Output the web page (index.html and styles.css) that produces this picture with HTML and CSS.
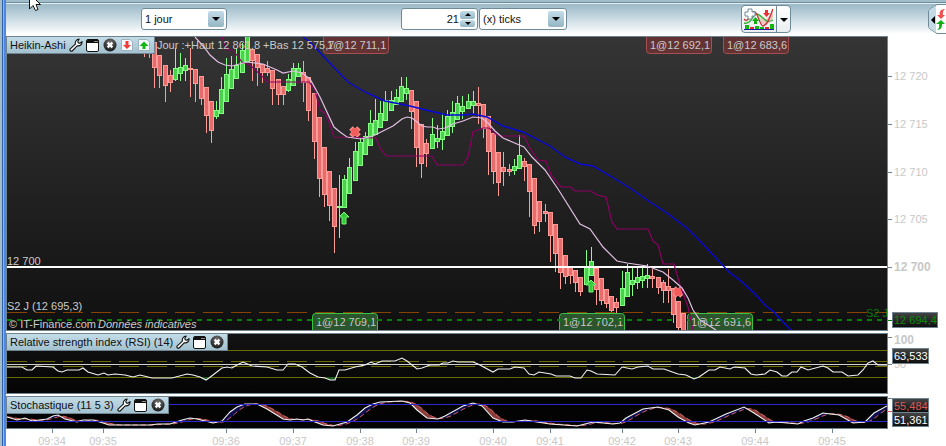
FILE: index.html
```html
<!DOCTYPE html>
<html lang="fr">
<head>
  <meta charset="UTF-8">
  <title>Heikin-Ashi - 21 ticks</title>
  <link rel="stylesheet" href="styles.css">
</head>
<body>

  <!-- Icônes -->
  <svg class="defs" aria-hidden="true">
    <defs>
      <linearGradient id="night" x1="0" y1="0" x2="0" y2="1">
        <stop offset="0" stop-color="#454545"/>
        <stop offset="1" stop-color="#0c0c0c"/>
      </linearGradient>
      <radialGradient id="ball" cx="0.5" cy="0.3" r="0.7">
        <stop offset="0" stop-color="#777"/>
        <stop offset="1" stop-color="#151515"/>
      </radialGradient>
    </defs>
    <symbol id="wrench" viewBox="0 0 14 14">
      <path d="M1 11.2 L6.4 6.2 C5.8 3.6 7.4 1.2 10.2 1 L8.8 3.2 L9.2 4.9 L11 5.2 L13 3.6 C13.4 6.4 11 8.4 8.2 7.8 L3.2 13 C1.8 13.6 0.4 12.4 1 11.2 Z" fill="#fff" stroke="#111" stroke-width="1.1" stroke-linejoin="round"/>
    </symbol>
    <symbol id="window" viewBox="0 0 14 14">
      <rect x="0.5" y="1.5" width="12" height="12" rx="1.5" fill="#fff" stroke="#111"/>
      <path d="M1 5 V3 Q1 1 3 1 H10 Q12.500 1 12.500 3 V5 Z" fill="#111"/>
      <path d="M8 3.500 H12" stroke="#888"/>
    </symbol>
    <symbol id="close" viewBox="0 0 14 14">
      <circle cx="7" cy="7" r="6.500" fill="url(#ball)"/>
      <path d="M4.600 4.600 L9.400 9.400 M9.400 4.600 L4.600 9.400" stroke="#fff" stroke-width="2.200"/>
    </symbol>
    <symbol id="sell" viewBox="0 0 14 14">
      <path d="M1.500 1.500 H10 L12.500 4 V12.500 H1.500 Z" fill="#f6fafc" stroke="#9fb3bd"/>
      <path d="M5.500 3 H8.500 V7 H11 L7 11 L3 7 H5.500 Z" fill="#f03c3c"/>
    </symbol>
    <symbol id="buy" viewBox="0 0 14 14">
      <path d="M1.500 1.500 H10 L12.500 4 V12.500 H1.500 Z" fill="#f6fafc" stroke="#9fb3bd"/>
      <path d="M5.500 11 H8.500 V8 H11.500 L7 3.500 L2.500 8 H5.500 Z" fill="#12b812"/>
    </symbol>
  </svg>

  <header class="toolbar">
    <div class="tools">
      <div class="field period">
        <select aria-label="Période">
          <option>1 jour</option>
          <option>2 jours</option>
        </select>
        <span class="drop"></span>
      </div>
      <div class="pair">
        <div class="field count">
          <input type="text" inputmode="numeric" value="21" aria-label="Nombre">
          <div class="spin">
            <button class="up" aria-label="Plus"></button>
            <button class="down" aria-label="Moins"></button>
          </div>
        </div>
        <div class="field unit">
          <select aria-label="Unité">
            <option>(x) ticks</option>
            <option>(x) minutes</option>
          </select>
          <span class="drop"></span>
        </div>
      </div>
      <div class="indicators">
        <button class="add" aria-label="Ajouter un indicateur">
          <svg width="32" height="24" viewBox="0 0 32 24">
            <path d="M2 15 C9 18 10 5 15 7 C20 9 23 17 30 12 L30 2 C26 10 22 22 18 15 C14 7 11 2 8 8 Z" fill="#c5ecc5"/>
            <path d="M18 8 C23 16 26 10 30 2 L30 10 C26 16 23 22 18 15 Z" fill="#f4c4c4"/>
            <path d="M1 16 C9 18 9 7 14 7 C20 8 22 18 30 13" fill="none" stroke="#35b035" stroke-width="1.300"/>
            <path d="M1 12 C6 18 8 2 12 5 C16 9 17 19 20 19 C25 18 27 9 30 2" fill="none" stroke="#c93838" stroke-width="1.300"/>
            <path d="M5 2 h4 v3 h3 v4 h-3 v3 h-4 v-3 h-3 v-4 h3 Z" fill="#fff" stroke="#6f8b98"/>
            <path d="M22 3 h3 v3 h2 l-3.500 4 l-3.500 -4 h2 Z" fill="#ee2f2f"/>
            <path d="M11 17 h3 v-3 h2 l-3.500 -4 l-3.500 4 h2 Z" fill="#12b012"/>
            <path d="M2 18 h4 v4 h-4 Z M12 19 h4 v3 h-4 Z M17 20 h4 v2 h-4 Z M27 17 h4 v5 h-4 Z" fill="#12b812"/>
            <path d="M7 20 h4 v2 h-4 Z M22 20 h4 v2 h-4 Z" fill="#e02c2c"/>
            <path d="M1 22.500 H31" stroke="#1c1ca8"/>
          </svg>
        </button>
        <button class="more" aria-label="Autres indicateurs"></button>
      </div>
    </div>
    <button class="side" aria-label="Ordres">
      <svg width="18" height="30" viewBox="0 0 18 30">
        <path d="M18 0.500 H9 L2 5 Q0.500 6 0.500 8 V22 Q0.500 24 2 25 L9 29.500 H18" fill="#fff" stroke="#6f8b98"/>
        <path d="M1 8 Q1 6 2 5.500 L8 1.500 V28.500 L2 24.500 Q1 24 1 22 Z" fill="#c4dae4"/>
        <path d="M7 12 V20 L3 16 Z" fill="#000"/>
        <path d="M17 5 C12 5 11 9 12 11 H9 L13 15 L17 11 H15 C14.500 8 15 7 17 5 Z" fill="#ee5050"/>
        <path d="M9 26 C14 26 14 22 14 20 H17 L13 16 L8 20 H11 C11.500 23 11 25 9 26 Z" fill="#12b012"/>
      </svg>
    </button>
    <svg class="pointer" width="14" height="12" viewBox="0 0 14 12" aria-hidden="true">
      <path d="M0.500 -6 V9 L4 5.500 L6.500 10.500 L9 9.500 L7 4.500 H11.500 L1 -6 Z" fill="#fff" stroke="#111"/>
    </svg>
  </header>

  <main>
    <section class="pane">
      <div class="plot price">
        <svg id="price" height="293" role="img" aria-label="Heikin-Ashi"></svg>
        <div class="title">
          <span>Heikin-Ashi</span>
          <button aria-label="Réglages"><svg><use href="#wrench"/></svg></button>
          <button aria-label="Fenêtre"><svg><use href="#window"/></svg></button>
          <button aria-label="Fermer"><svg><use href="#close"/></svg></button>
          <button aria-label="Vendre"><svg><use href="#sell"/></svg></button>
          <button aria-label="Acheter"><svg><use href="#buy"/></svg></button>
        </div>
      </div>
      <svg class="scale" id="priceScale" height="295"></svg>
    </section>

    <section class="pane">
      <div class="plot rsi">
        <svg id="rsi" height="59" role="img" aria-label="RSI"></svg>
        <div class="title">
          <span>Relative strength index (RSI) (14)</span>
          <button aria-label="Réglages"><svg><use href="#wrench"/></svg></button>
          <button aria-label="Fenêtre"><svg><use href="#window"/></svg></button>
          <button aria-label="Fermer"><svg><use href="#close"/></svg></button>
        </div>
      </div>
      <svg class="scale" id="rsiScale" height="61"></svg>
    </section>

    <section class="pane">
      <div class="plot stoch">
        <svg id="stoch" height="31" role="img" aria-label="Stochastique"></svg>
        <div class="title">
          <span>Stochastique (11 5 3)</span>
          <button aria-label="Réglages"><svg><use href="#wrench"/></svg></button>
          <button aria-label="Fenêtre"><svg><use href="#window"/></svg></button>
          <button aria-label="Fermer"><svg><use href="#close"/></svg></button>
        </div>
      </div>
      <svg class="scale" id="stochScale" height="33"></svg>
    </section>

    <svg class="times" id="times" height="17"></svg>
  </main>

  <script src="chart.js"></script>
</body>
</html>
```

FILE: styles.css
```css
* { box-sizing: border-box; margin: 0; padding: 0; }
body {
  background: #fff;
  color: #111;
  font-family: "Liberation Sans", Arial, sans-serif;
  font-size: 11px;
  border-left: 6px solid #4c86e8;
  border-image: linear-gradient(to right, #a3bcc8 0 2px, #2f62a8 2px 3px, #8ab4f4 3px 4px, #4c86e8 4px 6px) 0 0 0 6;
  overflow: hidden;
}
button { border: none; background: none; cursor: pointer; }
svg { display: block; }
svg text { font-size: 11px; }
.defs { position: absolute; width: 0; height: 0; }

/* Barre d'outils */
.toolbar {
  position: relative;
  display: flex;
  justify-content: space-between;
  align-items: center;
  height: 36px;
  padding: 4px 0 2px 135px;
  background: linear-gradient(to bottom, #a2bdca 0 2px, #6f8b98 2px 3px, #e4eff4 3px 4px, #9bb9c7 4px, #c3d6df 17px, #fff 34px);
}
.tools { display: flex; align-items: center; gap: 174px; }
.pair { display: flex; gap: 1px; }
.field {
  display: flex;
  position: relative;
  height: 22px;
  background: #fff;
  border: 1px solid #6f8b98;
  border-radius: 3px;
}
.period { width: 86px; }
.count { width: 77px; }
.unit { width: 88px; }
.field select, .field input {
  width: 100%;
  min-width: 0;
  padding-left: 4px;
  border: none;
  background: transparent;
  appearance: none;
  outline: none;
  color: #111;
  font: 11px "Liberation Sans", Arial, sans-serif;
}
.field select { padding-left: 3px; }
.field input { padding: 0 1px 0 0; text-align: right; }
.drop {
  position: absolute;
  top: 2px;
  right: 2px;
  width: 16px;
  height: 16px;
  border-radius: 2px;
  background: linear-gradient(#c4dde8, #94b5c4);
  pointer-events: none;
}
.drop::after, .more::after, .up::after, .down::after {
  content: "";
  display: block;
  width: 0;
  margin: 6px auto 0;
  border: 4px solid transparent;
  border-top-color: #000;
  border-bottom: none;
}
.spin {
  display: flex;
  flex-direction: column;
  gap: 1px;
  padding: 2px 2px 2px 0;
}
.spin button {
  width: 15px;
  height: 8px;
  border-radius: 2px;
  background: linear-gradient(#c4dde8, #94b5c4);
}
.up::after, .down::after { margin-top: 0; border-width: 3px; border-bottom: none; }
.up::after { border: 3px solid transparent; border-bottom-color: #000; border-top: none; }
.indicators {
  display: flex;
  height: 28px;
  border: 1px solid #6f8b98;
  border-radius: 4px;
  background: linear-gradient(#fff, #e9eef1);
}
.add { padding: 1px; width: 35px; border-right: 1px solid #6f8b98; }
.more { width: 13px; }
.more::after { margin-top: 2px; }
.pointer { position: absolute; left: 23px; top: 0; }

/* Graphiques */
main { display: flex; flex-direction: column; gap: 2px; }
.pane { display: flex; }
.plot {
  position: relative;
  flex: 1;
  min-width: 0;
  overflow: hidden;
  border: 1px solid #6f8490;
}
.plot > svg { width: 100%; }
.price { background: linear-gradient(#353535, #101010); }
.rsi { background: linear-gradient(#131313, #040404); }
.stoch { background: #030303; }
.scale { width: 58px; }
.title {
  position: absolute;
  top: 0;
  left: 0;
  display: flex;
  align-items: center;
  gap: 3px;
  height: 17px;
  padding: 0 3px;
  background: linear-gradient(#c3dde8, #a3c1cf);
  border-right: 1px solid #6f8490;
  border-bottom: 1px solid #6f8490;
  white-space: nowrap;
}
.title button, .title svg { width: 14px; height: 14px; }
.times { width: 100%; margin-top: -2px; }

.axis { fill: #c8c8c8; }
.axis.big { font-size: 12px; font-weight: bold; }
.tick { stroke: #6f8490; }
.note { fill: #cacaca; }
.zone { fill: none; stroke: #6b6b00; }
.dash { stroke-dasharray: 20 8; }
.average { fill: none; stroke: #e3bfe3; stroke-width: 1.2; }
.stop { fill: none; stroke: #8c0062; stroke-width: 1.2; }
.trend { fill: none; stroke: #0808d8; stroke-width: 1.4; }
.line { fill: none; stroke: #f2f2f2; stroke-width: 1.1; }
.signal { fill: none; stroke: #d0605c; stroke-dasharray: 5 3; }
.bound { stroke: #2a2ad0; }
```

FILE: chart.js
```js
// [x, haut, haut du corps, bas du corps, bas], u = hausse
const candles = [
  [144,42,42,52,57], [149,42,42,53,58], [154,42,42,68,88], [159,55,55,76,88], [165,65,65,86,102],
  [170,70,75,83,92], [175,48,68,80,81,'u'], [180,53,67,74,81,'u'], [185,58,65,71,81,'u'],
  [190,48,68,70,97], [195,69,69,84,102], [201,76,76,99,105], [206,87,87,116,133],
  [211,101,101,131,143], [216,101,110,117,119,'u'], [221,77,89,114,114,'u'],
  [226,58,74,102,102,'u'], [231,56,69,89,89,'u'], [236,48,65,79,79,'u'], [242,43,50,73,73,'u'],
  [247,30,30,62,62,'u'], [252,49,49,61,81], [257,54,54,68,86], [262,64,64,73,83],
  [267,61,68,73,76], [272,70,70,89,105], [278,79,79,95,105], [283,86,86,95,105],
  [288,74,79,91,92,'u'], [293,63,68,86,86,'u'], [298,63,68,77,77,'u'], [303,61,72,83,102],
  [308,77,77,111,121], [314,93,93,142,159], [319,117,117,179,197], [324,147,147,195,207],
  [329,171,171,206,221], [334,188,188,227,253], [339,175,206,208,238,'u'],
  [344,175,179,208,208,'u'], [349,158,167,194,194,'u'], [355,142,151,181,181,'u'],
  [360,138,142,166,166,'u'], [365,132,136,155,155,'u'], [370,110,123,146,146,'u'],
  [375,99,120,135,135,'u'], [380,101,113,128,128,'u'], [385,91,100,121,121,'u'],
  [391,91,100,111,111,'u'], [396,89,97,105,105,'u'], [401,77,86,102,102,'u'],
  [406,77,88,94,100,'u'], [411,90,90,112,129], [416,101,101,148,167], [421,124,124,164,178],
  [426,139,143,154,167], [432,118,134,149,149,'u'], [437,125,138,142,148,'u'],
  [442,113,131,140,150,'u'], [447,110,116,136,136,'u'], [452,101,112,127,133,'u'],
  [457,96,103,120,120,'u'], [462,96,106,112,119,'u'], [468,94,101,109,109,'u'],
  [473,91,101,106,114,'u'], [478,87,103,106,124], [483,104,104,129,138], [488,116,116,152,175],
  [493,133,133,172,184], [498,152,152,183,196], [503,152,167,172,186], [509,164,169,172,176],
  [514,159,166,171,175,'u'], [519,135,155,169,169,'u'], [524,158,161,167,181],
  [529,164,164,192,217], [534,178,178,226,234], [539,201,201,222,232], [545,204,211,214,222],
  [550,212,212,236,262], [555,224,224,254,272], [560,238,238,273,289], [565,255,255,277,284],
  [570,267,267,276,284], [575,270,270,283,292], [580,277,277,292,296],
  [586,250,267,285,285,'u'], [591,247,261,276,276,'u'], [596,268,268,290,305],
  [601,278,278,301,305], [606,289,289,304,308], [611,296,296,311,312], [616,298,302,308,313],
  [622,271,288,306,306,'u'], [627,264,272,297,297,'u'], [632,266,280,285,296,'u'],
  [637,266,277,283,289,'u'], [642,266,276,281,288,'u'], [647,264,275,279,288,'u'],
  [652,269,276,279,288], [658,277,277,288,294], [663,280,282,291,303], [668,269,286,291,303],
  [673,288,288,315,323], [678,301,301,328,330], [683,313,313,332,332]
];

const average = '195,37 204,47 210,55 218,62 225,65 232,66 247,62 263,64 277,70 283,73 293,71 302,73 310,79 320,97 334,127 340,132 347,137 361,139 373,136 385,130 393,126 402,119 407,117 412,118 422,126 427,127 433,127 438,129 445,128 453,124 463,121 473,117 482,118 488,123 495,131 503,138 517,144 524,147 532,157 545,170 558,189 580,224 590,229 603,247 617,261 627,263 647,266 663,272 673,280 682,288 688,298 693,310 700,320 708,325 716,330';
const stop = '222,37 227,50 233,50 242,62 250,65 268,82 309,82 315,90 320,110 325,113 329,122 334,137 376,138 380,148 386,156 432,156 437,165 463,165 468,157 473,132 483,128 489,128 498,136 524,136 530,148 538,160 546,161 551,175 561,187 571,187 575,191 591,191 597,195 606,197 612,222 617,229 648,229 653,241 658,245 663,264 674,264 680,285 688,307 693,330';
const trend = '303,37 310,42 327,60 348,82 365,92 385,101 410,106 430,111 447,115 463,115 473,114 487,117 503,126 523,132 550,146 565,157 580,164 593,166 617,180 633,190 650,202 667,213 688,229 700,241 729,272 741,281 754,293 766,306 774,312 781,320 791,330';
const rsi = '7,367 22,367 27,370 32,370 36,366 53,367 58,371 62,372 67,370 79,370 83,368 88,372 98,375 104,373 108,375 115,374 125,375 133,377 140,375 152,378 172,378 187,374 193,375 200,377 206,380 209,378 222,368 227,367 232,368 237,365 243,362 252,366 267,367 277,370 283,370 288,364 295,364 302,367 310,373 318,377 325,378 330,380 335,380 339,370 345,370 355,367 365,365 371,362 375,364 382,361 395,361 402,358 407,361 417,369 422,368 430,365 439,365 443,363 448,363 453,361 458,362 473,362 478,364 493,372 498,369 510,369 515,367 524,368 529,374 534,375 539,372 551,374 556,376 570,376 575,378 581,378 587,370 591,371 597,374 615,375 622,367 632,369 638,367 648,366 653,369 664,369 678,374 686,375 694,379 699,377 709,370 715,370 720,367 730,369 734,367 745,368 751,374 756,375 765,374 770,370 777,372 782,376 787,376 792,372 797,372 801,367 808,370 823,366 828,368 833,372 842,372 848,376 858,375 863,370 868,363 873,361 878,365 887,365';
const stoch = '7,417 17,420 25,418 32,421 47,419 53,416 58,415 65,419 77,422 83,420 93,420 103,423 109,425 150,425 158,424 170,424 182,420 190,418 197,419 213,423 222,421 230,412 237,407 245,404 257,404 267,409 283,419 290,420 297,419 303,420 308,419 315,422 323,425 333,426 347,422 357,415 365,408 373,404 380,402 402,401 410,403 417,410 427,418 438,419 445,416 463,406 473,403 482,406 493,418 503,422 512,422 525,420 537,422 550,424 577,426 593,422 613,424 620,423 626,418 643,409 658,407 669,410 678,417 689,423 695,425 709,422 726,414 744,407 754,413 769,423 776,422 798,424 804,421 813,418 823,413 839,415 853,423 865,422 874,413 887,406';

const hline = (y, cls) => `<path class="${cls}" d="M7 ${y} H3000"/>`;
const poly = (points, cls) => `<polyline class="${cls}" points="${points}"/>`;
const text = (x, y, s, cls, extra = '') => `<text x="${x}" y="${y}" class="${cls}" ${extra}>${s}</text>`;

function draw(id, x, y, content) {
  document.getElementById(id).innerHTML = `<g transform="translate(${-x} ${-y})">${content}</g>`;
}

function candle([x, high, top, bottom, low, up]) {
  const edge = up ? '#84ff84' : '#ff9c98';
  const fill = up ? '#4ccf4c' : '#e96c6c';
  return `<rect x="${x}" y="${high}" width="1" height="${low - high}" fill="${edge}"/>` +
    `<rect x="${x - 2}" y="${top}" width="5" height="${bottom - top}" fill="${edge}"/>` +
    `<rect x="${x - 1}" y="${top + 1}" width="3" height="${Math.max(0, bottom - top - 2)}" fill="${fill}"/>`;
}

// Étiquettes d'ordres
function sellTag(x, label) {
  return `<path d="M${x}.5 36 V50.5 Q${x}.5 53.5 ${x + 3}.5 53.5 H${x + 62}.5 Q${x + 65}.5 53.5 ${x + 65}.5 50.5 V36" fill="#633334" stroke="#a45052"/>` +
    text(x + 4, 49, label, 'note');
}
function buyTag(x, label) {
  return `<path d="M${x}.5 332 V316.5 Q${x}.5 313.5 ${x + 3}.5 313.5 H${x + 62}.5 Q${x + 65}.5 313.5 ${x + 65}.5 316.5 V332" fill="#2c552e" stroke="#38c344"/>` +
    text(x + 4, 326, label, 'note');
}

function cross(x, y) {
  return `<path d="M${x - 4} ${y - 4} L${x + 4} ${y + 4} M${x + 4} ${y - 4} L${x - 4} ${y + 4}" stroke="#ff8f8c" stroke-width="5"/>` +
    `<path d="M${x - 3} ${y - 3} L${x + 3} ${y + 3} M${x + 3} ${y - 3} L${x - 3} ${y + 3}" stroke="#f25c5a" stroke-width="4"/>`;
}
function arrow(x, y) {
  return `<path d="M${x} ${y} L${x + 5} ${y + 5} H${x + 2} V${y + 12} H${x - 2} V${y + 5} H${x - 5} Z" fill="#35c93c" stroke="#74f874"/>`;
}

function badge(x, y, w, h, label, color) {
  return `<rect x="${x}.5" y="${y}.5" width="${w}" height="${h}" fill="url(#night)" stroke="#6f8490"/>` +
    text(x + 2, y + 12, label, '', `fill="${color}"`);
}
const tick = (y, color = '#6f8490') => `<path d="M887 ${y}.5 H892" stroke="${color}"/>`;

draw('price', 7, 37,
  text(7, 265, '12 700', 'note') +
  text(7, 310, 'S2 J (12 695,3)', 'note') +
  `<path class="dash" d="M7 312.5 H3000" stroke="#874200"/>` +
  text(866, 317, 'S2 J', '', 'fill="#0a7a0a"') +
  buyTag(312, '1@12 709,1') + buyTag(559, '1@12 702,1') + buyTag(687, '1@12 691,6') +
  `<path d="M7 320 H3000" stroke="#058205" stroke-width="2" stroke-dasharray="5 5"/>` +
  text(9, 328, '© IT-Finance.com', 'note') +
  text(98, 328, 'Données indicatives', 'note', 'font-style="italic"') +
  candles.map(candle).join('') +
  `<rect x="7" y="266" width="3000" height="2" fill="#fff"/>` +
  cross(355, 132) + cross(678, 292) + arrow(344, 212) + arrow(591, 280) +
  poly(trend, 'trend') + poly(stop, 'stop') + poly(average, 'average') +
  sellTag(323, '1@12 711,1') + sellTag(646, '1@12 692,1') + sellTag(723, '1@12 683,6') +
  text(157, 49, 'Jour :+Haut 12 861,8 +Bas 12 575,7', 'note')
);

draw('priceScale', 888, 36,
  [[76, '12 720'], [124, '12 715'], [172, '12 710'], [219, '12 705']]
    .map(([y, s]) => tick(y) + text(894, y + 4, s, 'axis')).join('') +
  tick(267) + text(894, 271, '12 700', 'axis big') +
  tick(320, '#058205') + badge(892, 312, 45, 15, '12 694,4', '#0a8a0a')
);

draw('rsi', 7, 334,
  hline(350.5, 'zone') + hline(361.5, 'zone dash') + hline(366.5, 'zone dash') + hline(377.5, 'zone') +
  `<path d="M7 364.5 H3000" stroke="#d0d0d0"/>` +
  `<path d="M200 377 L206 380 L210 377 Z M325 377 L330 380 H335 L337 377 Z M690 377 L694 379 L699 377 Z" fill="#1d5a1d"/>` +
  poly(rsi, 'line')
);

draw('rsiScale', 888, 333,
  tick(337) + text(894, 344, '100', 'axis big') +
  tick(364) + text(894, 368, '50', 'axis') +
  badge(892, 348, 36, 15, '63,533', '#fff')
);

// %D : moyenne de %K sur les dernières barres
const knots = stoch.split(' ').map(p => p.split(',').map(Number));
function kAt(x) {
  x = Math.max(7, x);
  const i = Math.max(1, knots.findIndex(p => p[0] >= x));
  const [x0, y0] = knots[i - 1];
  const [x1, y1] = knots[i];
  return y0 + (y1 - y0) * (x - x0) / (x1 - x0);
}
let fills = '';
const signal = [];
for (let x = 7; x < 887; x++) {
  const k = kAt(x);
  const d = (kAt(x - 1) + kAt(x - 6) + kAt(x - 11)) / 3;
  signal.push(x + ',' + d.toFixed(1));
  fills += `<rect x="${x}" y="${Math.min(k, d).toFixed(1)}" width="1" height="${Math.abs(k - d).toFixed(1)}" fill="${k < d ? '#0d0d50' : '#8c3c3a'}"/>`;
}

draw('stoch', 7, 397,
  fills + poly(signal.join(' '), 'signal') + poly(stoch, 'line') +
  `<path class="bound" d="M7 404.5 H3000 M7 421.5 H3000"/>`
);

draw('stochScale', 888, 396,
  tick(398) + tick(411, '#d8524f') +
  badge(892, 398, 36, 14, '55,484', '#dc5856') + badge(892, 412, 36, 14, '51,361', '#fff')
);

draw('times', 6, 429,
  [[52, '09:34'], [103, '09:35'], [226, '09:36'], [293, '09:37'], [360, '09:38'], [416, '09:39'], [493, '09:40'],
   [550, '09:41'], [622, '09:42'], [678, '09:43'], [755, '09:44'], [832, '09:45']]
    .map(([x, s]) => `<path class="tick" d="M${x}.5 429 V433"/>` + text(x, 445, s, 'axis', 'text-anchor="middle"')).join('')
);
```
